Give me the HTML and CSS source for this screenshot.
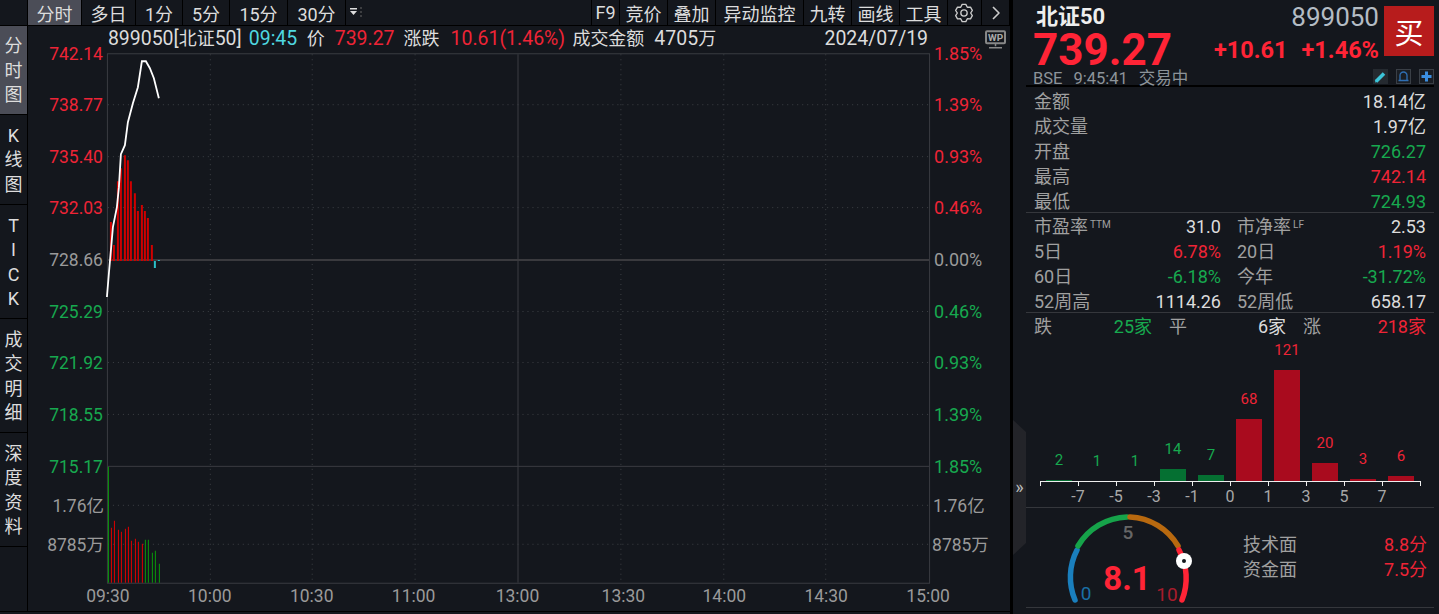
FILE: index.html
```html
<!DOCTYPE html>
<html lang="zh-CN">
<head>
  <meta charset="UTF-8">
  <title>北证50 分时</title>
  <link rel="stylesheet" href="styles.css">
</head>
<body>
<div class="app">
  <div class="main">
    <div class="toolbar">
      <div class="tab tab-corner"></div>
      <div class="tab tab-on w53">分时</div>
      <div class="tab w53">多日</div>
      <div class="tab w46">1分</div>
      <div class="tab w46">5分</div>
      <div class="tab w57">15分</div>
      <div class="tab w57">30分</div>
      <div class="tab w18 tab-more">
        <svg width="18" height="25" viewBox="0 0 18 25"><path class="more" d="M4 8h7v1.500H4zM4 11h7l-3.500 4z"/><path class="more-dots" d="M15 7v12"/></svg>
      </div>
      <div class="tab-gap"></div>
      <div class="tab w28">F9</div>
      <div class="tab w47">竞价</div>
      <div class="tab w47">叠加</div>
      <div class="tab w87">异动监控</div>
      <div class="tab w47">九转</div>
      <div class="tab w47">画线</div>
      <div class="tab w47">工具</div>
      <div class="tab w33">
        <svg class="gear" width="20" height="20" viewBox="0 0 24 24"><circle class="ico" cx="12" cy="12" r="3.800"/><path class="ico" d="M9.800 1.700L14.200 1.700 16 5.100 19.800 5 22 8.800 20 12 22 15.200 19.800 19 16 18.900 14.200 22.300 9.800 22.300 8 18.900 4.200 19 2 15.200 4 12 2 8.800 4.200 5 8 5.100z"/></svg>
      </div>
      <div class="tab w28">
        <svg width="12" height="16" viewBox="0 0 12 16"><path class="ico" d="M3 2l6 6-6 6"/></svg>
      </div>
    </div>

    <div class="body">
      <div class="sidebar">
        <div class="side-tab side-on h88">分<br>时<br>图</div>
        <div class="side-tab h90">K<br>线<br>图</div>
        <div class="side-tab h114">T<br>I<br>C<br>K</div>
        <div class="side-tab h114">成<br>交<br>明<br>细</div>
        <div class="side-tab h114">深<br>度<br>资<br>料</div>
      </div>

      <svg class="chart" width="983" height="586" viewBox="28 26 983 586">
        <!-- 表头 -->
        <text class="head white" x="108" y="45">899050[<tspan class="head-cjk">北证</tspan>50]</text>
        <text class="head cyan" x="249" y="45">09:45</text>
        <text class="head-cjk white" x="307" y="45">价</text>
        <text class="head red" x="335" y="45">739.27</text>
        <text class="head-cjk white" x="404" y="45">涨跌</text>
        <text class="head red" x="451" y="45">10.61(1.46%)</text>
        <text class="head-cjk white" x="573" y="45">成交金额</text>
        <text class="head white" x="655" y="45">4705<tspan class="head-cjk">万</tspan></text>
        <text class="head white end" x="929" y="45">2024/07/19</text>

        <!-- WP 图标 -->
        <rect class="wp" x="987" y="31" width="19" height="12" rx="1"/>
        <text class="wp-text" x="996.500" y="41">WP</text>
        <path class="wp-foot" d="M996.500 43v3M990 47.500h13"/>

        <!-- 网格 -->
        <path class="dots" d="M108 104.500h822M108 156.500h822M108 207.500h822M108 311.500h822M108 362.500h822M108 414.500h822M108 505.500h822M108 544.500h822"/>
        <path class="dots" d="M210.500 54v529M312.500 54v529M415.500 54v529M621.500 54v529M724.500 54v529M826.500 54v529"/>
        <rect class="frame" x="107.500" y="53.500" width="823" height="530"/>
        <path class="solid" d="M108 466.500h822M518.500 54v529"/>
        <path class="zero" d="M108 260h822"/>

        <!-- 左轴 -->
        <text class="t red end" x="103" y="60">742.14</text>
        <text class="t red end" x="103" y="111">738.77</text>
        <text class="t red end" x="103" y="163">735.40</text>
        <text class="t red end" x="103" y="214">732.03</text>
        <text class="t grey end" x="103" y="266">728.66</text>
        <text class="t green end" x="103" y="318">725.29</text>
        <text class="t green end" x="103" y="369">721.92</text>
        <text class="t green end" x="103" y="421">718.55</text>
        <text class="t green end" x="103" y="473">715.17</text>
        <text class="t grey end" x="104" y="512">1.76亿</text>
        <text class="t grey end" x="104" y="551">8785万</text>

        <!-- 右轴 -->
        <text class="t pct red" x="935" y="60">1.85%</text>
        <text class="t pct red" x="935" y="111">1.39%</text>
        <text class="t pct red" x="935" y="163">0.93%</text>
        <text class="t pct red" x="935" y="214">0.46%</text>
        <text class="t pct grey" x="935" y="266">0.00%</text>
        <text class="t pct green" x="935" y="318">0.46%</text>
        <text class="t pct green" x="935" y="369">0.93%</text>
        <text class="t pct green" x="935" y="421">1.39%</text>
        <text class="t pct green" x="935" y="473">1.85%</text>
        <text class="t grey" x="934" y="512">1.76亿</text>
        <text class="t grey" x="933" y="551">8785万</text>

        <!-- 时间轴 -->
        <text class="t grey mid" x="108" y="602">09:30</text>
        <text class="t grey mid" x="210" y="602">10:00</text>
        <text class="t grey mid" x="312" y="602">10:30</text>
        <text class="t grey mid" x="414" y="602">11:00</text>
        <text class="t grey mid" x="518" y="602">13:00</text>
        <text class="t grey mid" x="624" y="602">13:30</text>
        <text class="t grey mid" x="725" y="602">14:00</text>
        <text class="t grey mid" x="827" y="602">14:30</text>
        <text class="t grey mid" x="929" y="602">15:00</text>

        <!-- 涨跌柱 -->
        <path class="bar-up" d="M111 222V261M114 245V261M118 181V261M121 168V261M125 155V261M128 160V261M131 181V261M135 193V261M138 211V261M142 205V261M145 211V261M148 218V261M152 245V261"/>
        <path class="bar-down" d="M155 261V268M159 260v1"/>

        <!-- 分时线 -->
        <polyline class="price" points="107,297 108,285 109,273 111,250 113,227 117,207 119,187 121,154 125,145 128,122 133,103 138,87 142,61 146,61 150,68 154,78 159,98"/>

        <!-- 成交量 -->
        <path class="vol-green" d="M108.500 467V583M145.500 540V583M148.500 540V583M152.500 553V583M155.500 551V583M159.500 564V583"/>
        <path class="vol-red" d="M111.500 528V583M114.500 521V583M118.500 530V583M121.500 532V583M125.500 529V583M128.500 527V583M131.500 541V583M135.500 539V583M138.500 542V583M142.500 544V583"/>
      </svg>
    </div>
  </div>

  <div class="side">
    <div class="handle"><span class="handle-icon">»</span></div>

    <div class="quote">
      <div class="quote-top">
        <div class="quote-left">
          <div class="name">北证50</div>
          <div class="last">739.27</div>
        </div>
        <div class="quote-mid">
          <div class="code">899050</div>
          <div class="change"><span>+10.61</span><span>+1.46%</span></div>
        </div>
        <div class="buy">买</div>
      </div>
      <div class="quote-meta">
        <div class="meta-text"><span>BSE</span><span>9:45:41</span><span>交易中</span></div>
        <div class="meta-icons">
          <svg class="mini" width="15" height="15" viewBox="0 0 15 15"><rect class="mini-bg" width="15" height="15"/><path class="pen" d="M3 12.500L11 4.500"/><path class="pen-tip" d="M2 13.500l.7-3 2.300 2.300z"/></svg>
          <svg class="mini" width="15" height="15" viewBox="0 0 15 15"><rect class="mini-box" x=".5" y=".5" width="14" height="14"/><path class="bell" d="M2.500 11.500h10M4 11V6.500a3.500 3.500 0 0 1 7 0V11"/></svg>
          <svg class="mini" width="15" height="15" viewBox="0 0 15 15"><rect class="mini-box" x=".5" y=".5" width="14" height="14"/><path class="plus" d="M7.500 2.500v10M2.500 7.500h10"/></svg>
        </div>
      </div>
    </div>

    <div class="rows">
      <div class="row"><span class="lbl">金额</span><span class="val">18.14亿</span></div>
      <div class="row"><span class="lbl">成交量</span><span class="val">1.97亿</span></div>
      <div class="row"><span class="lbl">开盘</span><span class="val up-green">726.27</span></div>
      <div class="row"><span class="lbl">最高</span><span class="val up-red">742.14</span></div>
      <div class="row"><span class="lbl">最低</span><span class="val up-green">724.93</span></div>
    </div>

    <div class="stats">
      <div class="row"><span class="lbl">市盈率<sup>TTM</sup></span><span class="val">31.0</span></div>
      <div class="row"><span class="lbl">市净率<sup>LF</sup></span><span class="val">2.53</span></div>
      <div class="row"><span class="lbl">5日</span><span class="val up-red">6.78%</span></div>
      <div class="row"><span class="lbl">20日</span><span class="val up-red">1.19%</span></div>
      <div class="row"><span class="lbl">60日</span><span class="val up-green">-6.18%</span></div>
      <div class="row"><span class="lbl">今年</span><span class="val up-green">-31.72%</span></div>
      <div class="row"><span class="lbl">52周高</span><span class="val">1114.26</span></div>
      <div class="row"><span class="lbl">52周低</span><span class="val">658.17</span></div>
    </div>

    <div class="breadth">
      <div class="row"><span class="lbl">跌</span><span class="val up-green">25家</span></div>
      <div class="row"><span class="lbl">平</span><span class="val">6家</span></div>
      <div class="row"><span class="lbl">涨</span><span class="val up-red">218家</span></div>
    </div>

    <div class="hist">
      <div class="hist-col green"><span>2</span><i style="height:1px"></i></div>
      <div class="hist-col green"><span>1</span><i style="height:0"></i></div>
      <div class="hist-col green"><span>1</span><i style="height:0"></i></div>
      <div class="hist-col green"><span>14</span><i style="height:12px"></i></div>
      <div class="hist-col green"><span>7</span><i style="height:6px"></i></div>
      <div class="hist-col red"><span>68</span><i style="height:62px"></i></div>
      <div class="hist-col red"><span>121</span><i style="height:111px"></i></div>
      <div class="hist-col red"><span>20</span><i style="height:18px"></i></div>
      <div class="hist-col red"><span>3</span><i style="height:2px"></i></div>
      <div class="hist-col red"><span>6</span><i style="height:5px"></i></div>
    </div>
    <div class="ticks">
      <i></i><i></i><i></i><i></i><i></i><i></i><i></i><i></i><i></i><i></i>
    </div>
    <div class="tick-labels">
      <span>-7</span><span>-5</span><span>-3</span><span>-1</span><span>0</span><span>1</span><span>3</span><span>5</span><span>7</span>
    </div>

    <div class="score">
      <svg class="gauge" width="140" height="99" viewBox="1060 510 140 99">
        <path class="arc arc-blue" d="M1075 602A59 59 0 0 1 1077 552"/>
        <path class="arc arc-green" d="M1078 548A59 59 0 0 1 1127 519"/>
        <path class="arc arc-orange" d="M1130 519A59 59 0 0 1 1178 548"/>
        <path class="arc arc-red" d="M1179 552A59 59 0 0 1 1182 602"/>
        <text class="g-five" x="1128" y="541">5</text>
        <text class="g-zero" x="1086" y="602">0</text>
        <text class="g-ten" x="1167" y="603">10</text>
        <text class="g-num" x="1127" y="592">8.1</text>
        <circle class="knob" cx="1184" cy="563" r="8"/>
        <circle class="knob-dot" cx="1184" cy="563" r="2"/>
      </svg>
      <div class="score-text">
        <div class="row"><span class="lbl">技术面</span><span class="val up-red">8.8分</span></div>
        <div class="row"><span class="lbl">资金面</span><span class="val up-red">7.5分</span></div>
      </div>
    </div>
  </div>
</div>
</body>
</html>
```

FILE: styles.css
```css
* {
  box-sizing: border-box;
}
html, body {
  margin: 0;
  height: 100%;
  background: #14171d;
  overflow: hidden;
}
body {
  font-family: Roboto, "Noto Sans CJK SC", sans-serif;
  font-size: 18px;
  color: #ddd;
}
.app {
  display: flex;
  width: 1439px;
  height: 614px;
}
.main {
  width: 1010px;
  height: 612px;
  border-bottom: 1px solid #000;
}
.toolbar {
  display: flex;
  height: 26px;
  background: #14171d;
  border-bottom: 1px solid #000;
}
.tab {
  display: flex;
  align-items: center;
  justify-content: center;
  border-right: 1px solid #000;
  color: #ddd;
  flex-shrink: 0;
}
.tab-corner { width: 28px; border-right: 1px solid #000; }
.tab-on { background: #4b4d57; }
.tab-gap { flex: 1; border-right: 1px solid #000; }
.w18 { width: 18px; border-right: 0; }
.w28 { width: 28px; }
.w33 { width: 34px; }
.w46 { width: 47px; }
.w47 { width: 48px; }
.w53 { width: 54px; }
.w57 { width: 58px; }
.w87 { width: 88px; }
.more { fill: #ddd; }
.more-dots { stroke: #666; stroke-dasharray: 2 2; }
.gear { margin-right: 2px; }
.ico {
  fill: none;
  stroke: #ccc;
  stroke-width: 1.600;
  stroke-linejoin: round;
}
.body {
  display: flex;
  height: 585px;
}
.sidebar {
  width: 28px;
  flex-shrink: 0;
  border-right: 1px solid #000;
}
.side-tab {
  display: flex;
  align-items: center;
  justify-content: center;
  text-align: center;
  padding-top: 2px;
  line-height: 24.500px;
  border-bottom: 1px solid #000;
}
.side-on { background: #4b4d57; }
.h88 { height: 89px; }
.h90 { height: 90px; }
.h114 { height: 114px; }
.chart {
  display: block;
}

/* 图表文字 */
.t {
  font-size: 17.500px;
}
.pct { font-size: 18px; }
.head { font-size: 19.500px; }
.head-cjk { font-size: 18px; }
.end { text-anchor: end; }
.mid { text-anchor: middle; }
.white { fill: #dcdcdc; }
.grey { fill: #9a9a9a; }
.red { fill: #ee2436; }
.green { fill: #17a94f; }
.cyan { fill: #4fd8e0; }
.wp { fill: none; stroke: #888; stroke-width: 2; }
.wp-text { fill: #aaa; font-size: 10px; font-weight: 700; text-anchor: middle; }
.wp-foot { stroke: #888; stroke-width: 1.500; fill: none; }
.dots { stroke: #3d4045; stroke-dasharray: 1 4; fill: none; }
.frame { fill: none; stroke: #3a3c42; }
.solid { stroke: #3a3c42; fill: none; }
.zero { stroke: #3a3a3e; stroke-width: 2; }
.bar-up { stroke: #d00000; stroke-width: 2; }
.bar-down { stroke: #2bbfc8; stroke-width: 2; }
.price { fill: none; stroke: #fff; stroke-width: 1.800; }
.vol-green { stroke: #0a9a0a; }
.vol-red { stroke: #e00000; }

/* 右侧 */
.side {
  position: relative;
  width: 429px;
  padding-left: 13px;
  padding-right: 5px;
  border-left: 3px solid #000;
}
.handle {
  position: absolute;
  left: 0;
  top: 420px;
  width: 13px;
  height: 135px;
  background: #232429;
  clip-path: polygon(0 0, 100% 12px, 100% 123px, 0 100%);
  display: flex;
  align-items: center;
  justify-content: center;
  color: #bbb;
  font-size: 18px;
}
.handle-icon { margin-top: -2px; }
.quote {
  height: 87px;
  padding-left: 7px;
  border-bottom: 2px solid #000;
}
.quote-top {
  display: flex;
  height: 71px;
}
.quote-left { padding-top: 5px; }
.name {
  margin-left: 3px;
  font-size: 22px;
  font-weight: 700;
  line-height: 24px;
  color: #eee;
}
.last {
  font-size: 44px;
  font-weight: 700;
  line-height: 42px;
  color: #ff2436;
}
.quote-mid {
  margin-left: auto;
  padding-top: 4px;
  text-align: right;
}
.code {
  font-size: 26px;
  line-height: 26px;
  color: #b4bcc4;
}
.change {
  display: flex;
  justify-content: flex-end;
  gap: 14px;
  margin-top: 7px;
  font-size: 23.500px;
  font-weight: 700;
  line-height: 26px;
  color: #ff2436;
}
.buy {
  width: 50px;
  height: 50px;
  margin: 6px 0 0 5px;
  display: flex;
  align-items: center;
  justify-content: center;
  background: #b71c1c;
  color: #fff;
  font-size: 29px;
}
.quote-meta {
  display: flex;
  justify-content: space-between;
  align-items: flex-start;
}
.meta-text {
  display: flex;
  gap: 11px;
  font-size: 16.500px;
  line-height: 16px;
  color: #8d949a;
  height: 14px;
  overflow: visible;
}
.meta-icons {
  display: flex;
  gap: 8px;
  margin-top: -2px;
}
.mini { display: block; }
.mini-bg { fill: #252a30; }
.mini-box { fill: #1a1e24; stroke: #3a3f46; }
.pen { stroke: #3cc4d8; stroke-width: 3.500; }
.pen-tip { fill: #3cc4d8; }
.bell { fill: none; stroke: #2f6fb4; stroke-width: 1.300; }
.plus { stroke: #3b8ee0; stroke-width: 3; }
.rows, .stats, .breadth {
  padding: 0 8px;
  border-bottom: 1px solid #35373c;
}
.rows {
  height: 124px;
  margin-top: 2px;
}
.stats {
  display: grid;
  grid-template-columns: 187px 189px;
  column-gap: 16px;
  height: 100px;
  padding-top: 1px;
}
.breadth {
  display: grid;
  grid-template-columns: 118px 117px 123px;
  column-gap: 17px;
  border-bottom: 0;
  height: 26px;
  padding-top: 1px;
}
.row {
  display: flex;
  justify-content: space-between;
  height: 25px;
  line-height: 25px;
}
.lbl { color: #a0a0a0; }
.val { color: #dcdcdc; }
.lbl sup {
  font-size: 10px;
  line-height: 0;
  vertical-align: 5px;
  margin-left: 2px;
}
.up-red { color: #ee2436; }
.up-green { color: #17a94f; }

/* 涨跌分布 */
.hist {
  display: flex;
  align-items: flex-end;
  height: 142px;
  margin-left: 14px;
}
.hist-col {
  width: 38px;
  display: flex;
  flex-direction: column;
  align-items: center;
  font-size: 15px;
}
.hist-col span {
  line-height: 20px;
  margin-bottom: 10px;
}
.hist-col i {
  display: block;
  width: 26px;
}
.hist-col.green { color: #17a94f; }
.hist-col.green i { background: #057032; }
.hist-col.red { color: #ee2436; }
.hist-col.red i { background: #a90b1e; }
.ticks {
  display: flex;
  width: 381px;
  height: 5px;
  margin-left: 14px;
  border-top: 1px solid #eee;
}
.ticks i {
  width: 38px;
  border-left: 1px solid #eee;
}
.ticks i:last-child {
  width: 39px;
  border-right: 1px solid #eee;
}
.tick-labels {
  display: flex;
  height: 22px;
  padding-left: 33px;
  border-bottom: 1px solid #35373c;
  line-height: 22px;
  font-size: 16px;
  color: #a8a8a8;
}
.tick-labels span {
  width: 38px;
  text-align: center;
}

/* 评分 */
.score {
  display: flex;
  height: 100px;
  border-bottom: 1px solid #35373c;
}
.gauge {
  display: block;
  margin-left: 34px;
  flex-shrink: 0;
}
.score-text {
  width: 184px;
  margin-left: 43px;
  padding-top: 24px;
}
.arc {
  fill: none;
  stroke-width: 5.500;
  stroke-linecap: round;
}
.arc-blue { stroke: #1a7fbd; }
.arc-green { stroke: #16a34a; }
.arc-orange { stroke: #b8690f; }
.arc-red { stroke: #ff2436; }
.g-five { fill: #666; font-size: 19px; font-weight: 500; text-anchor: middle; }
.g-zero { fill: #1a6fa5; font-size: 19px; text-anchor: middle; }
.g-ten { fill: #a81c2c; font-size: 19px; text-anchor: middle; }
.g-num { fill: #ff2436; font-size: 33px; font-weight: 700; text-anchor: middle; }
.knob { fill: #fff; }
.knob-dot { fill: #14171d; }
```
